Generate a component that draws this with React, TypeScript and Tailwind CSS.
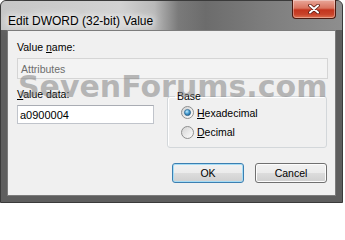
import React from 'react'

function Radio({ checked }: { checked?: boolean }) {
  return (
    <svg width="13" height="13" viewBox="0 0 13 13" className="shrink-0">
      <defs>
        <linearGradient id="rb" x1="0" y1="0" x2="1" y2="1">
          <stop offset="0" stopColor="#d2d2d2" />
          <stop offset="1" stopColor="#ffffff" />
        </linearGradient>
        <radialGradient id="rd" cx="0.4" cy="0.35" r="0.7">
          <stop offset="0" stopColor="#c4ecfd" />
          <stop offset="0.5" stopColor="#4ba0d4" />
          <stop offset="1" stopColor="#14598a" />
        </radialGradient>
      </defs>
      <circle cx="6.5" cy="6.5" r="6" fill="url(#rb)" stroke="#8e8f8f" />
      {checked && <circle cx="6.5" cy="6.5" r="3.1" fill="url(#rd)" stroke="#24587f" strokeWidth="0.6" />}
    </svg>
  )
}

function Button({ label, primary }: { label: string; primary?: boolean }) {
  return (
    <div
      className={
        primary
          ? 'flex h-[20px] w-[72px] items-center justify-center rounded-[3px] border border-[#3c7fb1] bg-[linear-gradient(to_bottom,#f2f2f2_0%,#ebebeb_50%,#dddddd_50%,#cfcfcf_100%)] text-black shadow-[inset_0_0_0_1px_#a6dcf5]'
          : 'flex h-[20px] w-[72px] items-center justify-center rounded-[3px] border border-[#707070] bg-[linear-gradient(to_bottom,#f2f2f2_0%,#ebebeb_50%,#dddddd_50%,#cfcfcf_100%)] text-black shadow-[inset_0_0_0_1px_#fcfcfc]'
      }
    >
      {label}
    </div>
  )
}

export default function App() {
  return (
    <div className="h-[205px] w-[345px] overflow-hidden bg-white font-['Liberation_Sans',Arial,sans-serif]">
      <div className="relative flex h-[203px] w-[343px] flex-col rounded-t-[6px] border border-[#3a3a3a] bg-[#5e5e5e]">
        {/* title bar */}
        <div className="h-[29px] shrink-0 rounded-t-[5px] bg-[linear-gradient(to_right,#c6c6c6_0%,#d2d2d2_35%,#b9b9b9_45%,#7a7a7a_52%,#6c6c6c_60%,#7e7e7e_78%,#8e8e8e_100%)] pl-[7px] pt-[7px]">
          <span className="text-[12px] leading-[16px] text-black [text-shadow:0_0_6px_#fff,0_0_10px_#fff,0_0_14px_#fff]">
            Edit DWORD (32-bit) Value
          </span>
        </div>

        {/* close button */}
        <div className="absolute right-[6px] top-[-1px] flex h-[19px] w-[44px] items-center justify-center rounded-b-[4px] border border-t-0 border-[#4b1a10] bg-[linear-gradient(to_bottom,#e9a799_0%,#d9745f_45%,#c3351e_55%,#c8432a_80%,#de7250_100%)] shadow-[inset_0_0_0_1px_rgba(255,255,255,0.35)]">
          <svg width="12" height="10" viewBox="0 0 12 10">
            <path d="M2 1.5 L10 8.5 M10 1.5 L2 8.5" stroke="#5a1a10" strokeWidth="3.6" strokeLinecap="round" />
            <path d="M2 1.5 L10 8.5 M10 1.5 L2 8.5" stroke="#ffffff" strokeWidth="2" strokeLinecap="round" />
          </svg>
        </div>

        {/* client area */}
        <div className="mx-[6px] flex h-[166px] shrink-0 flex-col border border-[#7c7c7c] bg-[#f0f0f0] pl-[9px] pr-[7px] pt-[10px] text-[10.5px] leading-[12px] text-black">
          <div>
            Value <u>n</u>ame:
          </div>
          <div className="mt-[5px] flex h-[21px] items-center border border-[#d5d5d5] bg-[#f3f3f3] pl-[3px] text-[#6d6d6d]">
            Attributes
          </div>

          <div className="mt-[9px] flex">
            <div className="flex w-[137px] flex-col">
              <div>
                <u>V</u>alue data:
              </div>
              <div className="mt-[5px] flex h-[19px] items-center border border-[#c0c4cb] border-t-[#a9acb3] bg-white pl-[2px] text-[11px]">
                a0900004
              </div>
            </div>

            <fieldset className="ml-[13px] mt-[2px] h-[58px] w-[160px] rounded-[3px] border border-[#d3d7da] shadow-[inset_1px_1px_0_#fff]">
              <legend className="ml-[7px] px-[2px] leading-[12px]">Base</legend>
              <div className="flex h-[20px] items-center pl-[13px] pt-[1px]">
                <Radio checked />
                <span className="ml-[3px]">
                  <u>H</u>exadecimal
                </span>
              </div>
              <div className="flex h-[20px] items-center pl-[13px]">
                <Radio />
                <span className="ml-[3px]">
                  <u>D</u>ecimal
                </span>
              </div>
            </fieldset>
          </div>

          <div className="mr-[1px] mt-[15px] flex justify-end gap-[11px]">
            <Button label="OK" primary />
            <Button label="Cancel" />
          </div>
        </div>

        {/* watermark */}
        <div className="pointer-events-none absolute left-[17px] top-[71px] z-10 whitespace-nowrap font-['DejaVu_Sans',sans-serif] text-[30px] font-bold leading-[30px] text-[#7a7a7a]/50">
          SevenForums.com
        </div>
      </div>
    </div>
  )
}
